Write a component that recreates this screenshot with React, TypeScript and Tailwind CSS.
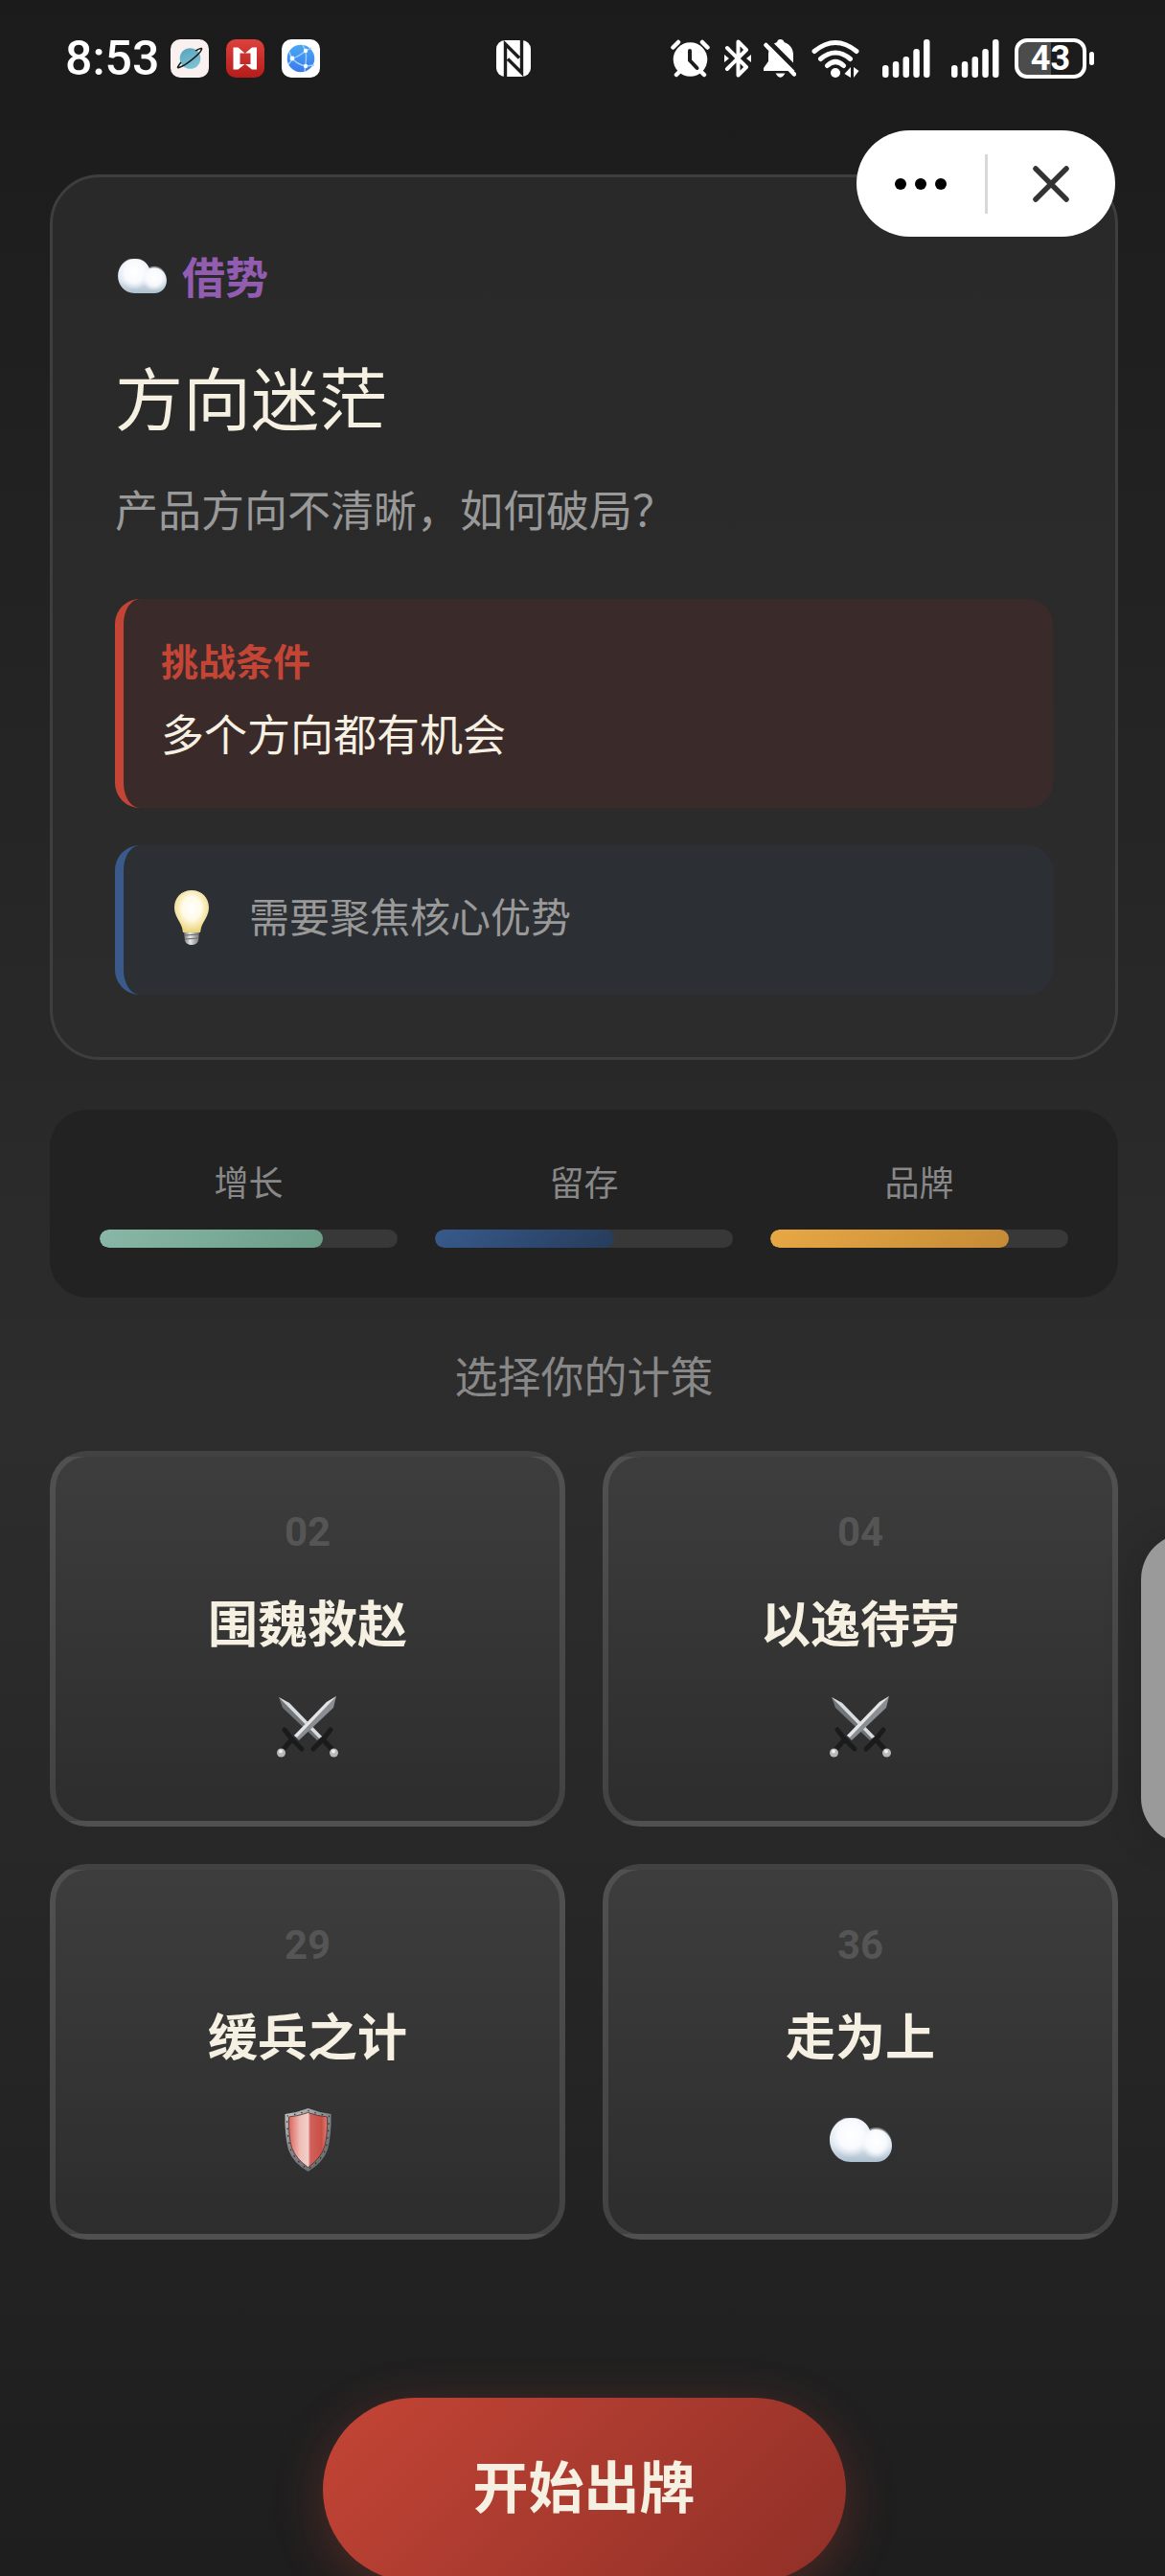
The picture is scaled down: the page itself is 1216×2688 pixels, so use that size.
import type { ReactNode } from 'react';

type IconKind = 'swords' | 'shield' | 'cloud';

const STATS = [
    { label: '增长', value: 75, fill: 'bg-[linear-gradient(135deg,#8ab8a8,#6a9c88)]' },
    { label: '留存', value: 60, fill: 'bg-[linear-gradient(135deg,#385a8c,#263c5a)]' },
    { label: '品牌', value: 80, fill: 'bg-[linear-gradient(135deg,#e8a845,#c48a35)]' },
];

const STRATEGIES: { no: string; name: string; icon: IconKind }[] = [
    { no: '02', name: '围魏救赵', icon: 'swords' },
    { no: '04', name: '以逸待劳', icon: 'swords' },
    { no: '29', name: '缓兵之计', icon: 'shield' },
    { no: '36', name: '走为上', icon: 'cloud' },
];

function Cloud({ className }: { className: string }) {
    return (
        <svg viewBox="0 0 65 46" className={className} aria-hidden="true">
            <defs>
                <radialGradient id="puff" cx="0.5" cy="0.42" r="0.5">
                    <stop offset="0" stopColor="#ffffff" />
                    <stop offset="0.6" stopColor="#fbfcff" stopOpacity="0.9" />
                    <stop offset="1" stopColor="#f2f5fb" stopOpacity="0" />
                </radialGradient>
                <linearGradient id="cloudBase" x1="0" y1="0" x2="0" y2="1">
                    <stop offset="0" stopColor="#f1f4fa" />
                    <stop offset="0.6" stopColor="#dde6ef" />
                    <stop offset="1" stopColor="#adc0ce" />
                </linearGradient>
            </defs>
            <path d="M22 0C33 0 40 6 42 13.500 44 12.300 46 12 48.500 12 58 12 65 19.500 65 29S58 46 48.500 46H22C9 46 0 35 0 23S9 0 22 0z" fill="url(#cloudBase)" />
            <ellipse cx="22" cy="22" rx="22" ry="23" fill="url(#puff)" />
            <ellipse cx="48.500" cy="28" rx="17" ry="18" fill="url(#puff)" />
        </svg>
    );
}

function Swords() {
    return (
        <svg viewBox="0 0 64 64" className="h-16 w-16" aria-hidden="true">
            <path d="M38 55 48 45l8-10M49 46l9 10" stroke="#1b1b1b" strokeWidth="5" fill="none" strokeLinecap="round" />
            <path d="M2 1l11 6 34 35-5 4L6 12z" fill="#70757a" />
            <path d="M2 1l11 6 34 35-3 2z" fill="#d9dbdd" />
            <path d="M26 55 16 45 8 35M15 46 6 56" stroke="#1b1b1b" strokeWidth="5" fill="none" strokeLinecap="round" />
            <path d="M62 0 52 6 18 41l5 5 36-34z" fill="#8a8e92" />
            <path d="M62 0 52 6 18 41l3 2z" fill="#e4e5e6" />
            <circle cx="4.500" cy="59" r="4.500" fill="#b9b9b9" />
            <circle cx="59.500" cy="59" r="4.500" fill="#b9b9b9" />
            <circle cx="4" cy="57.500" r="2" fill="#eeeeee" />
            <circle cx="59" cy="57.500" r="2" fill="#eeeeee" />
        </svg>
    );
}

function Shield() {
    return (
        <svg viewBox="0 0 49 66" className="h-[66px] w-[49px]" aria-hidden="true">
            <defs>
                <linearGradient id="shieldFace" x1="0" x2="1">
                    <stop offset="0" stopColor="#d9655c" />
                    <stop offset="0.3" stopColor="#f0bfb8" />
                    <stop offset="0.5" stopColor="#f2cfc9" />
                    <stop offset="0.56" stopColor="#d0625a" />
                    <stop offset="0.85" stopColor="#c94f46" />
                    <stop offset="1" stopColor="#e07b72" />
                </linearGradient>
                <linearGradient id="shieldRim" x1="0" y1="0" x2="0.6" y2="1">
                    <stop offset="0" stopColor="#c9c9cb" />
                    <stop offset="0.5" stopColor="#85868a" />
                    <stop offset="1" stopColor="#6b6c70" />
                </linearGradient>
            </defs>
            <path d="M0.500 6Q13 4.500 24.500 0 36 4.500 48.500 6 49 28 45 43 40 57 24.500 66 9 57 4 43 0 28 0.500 6z" fill="url(#shieldRim)" />
            <path d="M2.500 8Q14 6 24.500 2.500 35 6 46.500 8 46 30 43 42 38 55 24.500 63.500 11 55 6 42 3 30 2.500 8z" fill="none" stroke="#2b2b2d" strokeWidth="1.200" strokeDasharray="1.500 6" />
            <path d="M4.500 9Q15 8 24.500 4.500 34 8 44.500 9 45 29 41.500 41 37 53 24.500 61.500 12 53 7.500 41 4 29 4.500 9z" fill="url(#shieldFace)" stroke="#4b3031" strokeWidth="0.800" />
        </svg>
    );
}

function Bulb() {
    return (
        <svg viewBox="0 0 36 57" className="h-[57px] w-9" aria-hidden="true">
            <defs>
                <radialGradient id="glass" cx="0.5" cy="0.42" r="0.6">
                    <stop offset="0" stopColor="#ffffff" />
                    <stop offset="0.45" stopColor="#fffbe6" />
                    <stop offset="1" stopColor="#ead071" />
                </radialGradient>
                <linearGradient id="screw" x1="0" x2="1">
                    <stop offset="0" stopColor="#77797b" />
                    <stop offset="0.4" stopColor="#e6e6e6" />
                    <stop offset="1" stopColor="#747678" />
                </linearGradient>
            </defs>
            <path d="M10 43h16l-1 10q-2 4-7 4t-7-4z" fill="url(#screw)" />
            <path d="M11 47l14-1M11 51l13-1" stroke="#66686a" strokeWidth="1" />
            <path d="M18 0c11 0 18 8 18 18 0 9-6 14-8 21l-1 5H9l-1-5C6 32 0 27 0 18 0 8 7 0 18 0z" fill="url(#glass)" />
        </svg>
    );
}

function StrategyIcon({ kind }: { kind: IconKind }) {
    if (kind === 'swords') return <Swords />;
    if (kind === 'shield') return <Shield />;
    return <Cloud className="h-[46px] w-[65px]" />;
}

function Signal() {
    return (
        <svg viewBox="0 0 50 40" className="h-10 w-[50px]" fill="#ffffff" aria-hidden="true">
            <rect x="0" y="27" width="6.500" height="13" rx="3" />
            <rect x="10.800" y="23" width="6.500" height="17" rx="3" />
            <rect x="21.500" y="18" width="6.500" height="22" rx="3" />
            <rect x="32.300" y="10" width="6.500" height="30" rx="3" />
            <rect x="43" y="0" width="6.500" height="40" rx="3" />
        </svg>
    );
}

function StatusBar() {
    return (
        <div className="flex h-[122px] items-center justify-between pr-[74px] pl-[68px] text-white">
            <div className="flex items-center">
                <span className="w-[110px] font-[Roboto,sans-serif] text-[50px] leading-none font-medium">8:53</span>
                <div className="flex gap-[18px]">
                    <svg viewBox="0 0 40 40" className="h-10 w-10" aria-hidden="true">
                        <defs>
                            <linearGradient id="planet" x1="0" y1="0" x2="0.4" y2="1">
                                <stop offset="0" stopColor="#56a3bd" />
                                <stop offset="1" stopColor="#7dc0d2" />
                            </linearGradient>
                        </defs>
                        <rect width="40" height="40" rx="10" fill="#f8f1ef" />
                        <circle cx="20.500" cy="20" r="10.800" fill="url(#planet)" />
                        <path d="M11 24c-4 5-5 7-1 5 6-2 17-11 21-16 3-4 2-5-5-1" stroke="#161616" strokeWidth="1.400" fill="none" />
                    </svg>
                    <svg viewBox="0 0 40 40" className="h-10 w-10" aria-hidden="true">
                        <defs>
                            <linearGradient id="redApp" x1="0" y1="0" x2="0" y2="1">
                                <stop offset="0" stopColor="#dc413d" />
                                <stop offset="1" stopColor="#b41d1b" />
                            </linearGradient>
                        </defs>
                        <rect width="40" height="40" rx="10" fill="url(#redApp)" />
                        <path d="M7.500 8.500h5l7 6h-5v11.500h5l-7 5.500h-5zM32 8.500h-5l-7 6h5.500v11.500H20l7 5.500h5z" fill="#ffffff" />
                    </svg>
                    <svg viewBox="0 0 40 40" className="h-10 w-10" aria-hidden="true">
                        <defs>
                            <linearGradient id="globe" x1="0" y1="0" x2="0" y2="1">
                                <stop offset="0" stopColor="#4ba9f2" />
                                <stop offset="1" stopColor="#3b78f0" />
                            </linearGradient>
                        </defs>
                        <rect width="40" height="40" rx="10" fill="#ffffff" />
                        <circle cx="20" cy="20" r="14.300" fill="url(#globe)" />
                        <path d="M22 6q4 7 3.500 14T24 34M7 26q4-4 4-6 7-2 14-8l6-3M11 20q5 6 14 8l9-1M11 20q-2-3-3-7" stroke="#9fd4fb" strokeWidth="1.300" fill="none" />
                        <circle cx="11" cy="20" r="2.400" fill="#ffffff" />
                        <circle cx="25" cy="12" r="2.200" fill="#ffffff" />
                        <circle cx="25" cy="28" r="2.200" fill="#ffffff" />
                    </svg>
                </div>
                <svg viewBox="0 0 36 38" className="ml-[184px] h-[38px] w-9" aria-label="NFC">
                    <rect width="36" height="38" rx="9" fill="#ffffff" />
                    <path d="M9.500 38V4L24 18.500M26.500 0v34L12 19.500" stroke="#1c1c1c" strokeWidth="3.400" fill="none" />
                </svg>
            </div>
            <div className="flex items-center">
                <svg viewBox="0 0 41 40" className="h-10 w-[41px]" aria-label="闹钟">
                    <path d="M2.500 8.500 8 3M38.500 8.500 33 3M6 37l4-4M35 37l-4-4" stroke="#ffffff" strokeWidth="4.500" strokeLinecap="round" />
                    <circle cx="20.500" cy="21" r="17.800" fill="#ffffff" />
                    <path d="M20 12v10l7.500 8" stroke="#1c1c1c" strokeWidth="4" fill="none" strokeLinecap="round" strokeLinejoin="round" />
                </svg>
                <svg viewBox="0 0 28 40" className="ml-[15px] h-10 w-7" aria-label="蓝牙">
                    <path d="M3 9l20 20-8.500 8.500v-35L23 11 3 31" stroke="#ffffff" strokeWidth="4" fill="none" strokeLinecap="round" strokeLinejoin="round" />
                    <path d="M0 16l5 4-5 4zM28 16l-5 4 5 4z" fill="#ffffff" />
                </svg>
                <svg viewBox="0 0 34 40" className="ml-[13px] h-10 w-[34px]" aria-label="静音">
                    <path d="M17.500 0c2 0 3.500 1 4 3 6 2 9.500 7 9.500 13v9l3 8H0v-3l5-7v-7C5 10 8 5 14 3c.5-2 1.500-3 3.500-3z" fill="#ffffff" />
                    <path d="M12.500 35.500h10q-5 8.500-10 0z" fill="#ffffff" />
                    <path d="M1-2l34 34" stroke="#1c1c1c" strokeWidth="5" />
                    <path d="M2.500 6 32 36.500" stroke="#ffffff" strokeWidth="4.500" strokeLinecap="round" />
                </svg>
                <svg viewBox="0 0 50 40" className="ml-4 h-10 w-[50px]" aria-label="无线网络">
                    <path d="M3 12.500q22-18 44 0M9.500 20.500q15.500-13 31 0M16.500 27.500q8.500-8 17 0" stroke="#ffffff" strokeWidth="5" fill="none" strokeLinecap="round" />
                    <circle cx="25" cy="35" r="5" fill="#ffffff" />
                    <path d="M41 29v11l-6.500-4zM44 29v11l5.500-7z" fill="#ffffff" />
                </svg>
                <div className="ml-6 flex gap-[22px]">
                    <Signal />
                    <Signal />
                </div>
                <div className="ml-4 flex items-center gap-[3px]">
                    <div className="flex h-[42px] w-[75px] items-center justify-center rounded-[13px] border-4 border-white bg-[linear-gradient(90deg,#4c4c4c_50%,transparent_50%)] font-[Roboto,sans-serif] text-[36px] leading-none font-bold">
                        43
                    </div>
                    <div className="h-3.5 w-[5px] rounded-full bg-white" />
                </div>
            </div>
        </div>
    );
}

function Callout({ tone, children }: { tone: string; children: ReactNode }) {
    return <div className={`rounded-[26px] border-l-[9px] px-[39px] pt-9 pb-[42px] ${tone}`}>{children}</div>;
}

export default function App() {
    return (
        <div className="relative h-screen overflow-hidden bg-[#1a1a1a] font-['Noto_Sans_CJK_SC',sans-serif]">
            <div className="h-full overflow-y-auto [scrollbar-width:none]">
                <div className="bg-[linear-gradient(180deg,#1b1b1b_0%,#2d2d2d_50%,#1a1a1a_100%)] pb-[280px]">
                    <StatusBar />

                    <main className="pt-[60px] pr-[49px] pl-[52px]">
                        {/* Situation card */}
                        <section className="rounded-[52px] border-[3px] border-[#3e3e3e] bg-[linear-gradient(180deg,#292929,#2c2c2c)] p-[65px]">
                            <div className="flex items-center gap-4 text-[45px] leading-[76px] font-bold text-[#925cb1]">
                                <Cloud className="ml-[3px] h-9 w-[51px]" />
                                <span>借势</span>
                            </div>
                            <h1 className="mt-9 text-[71px] leading-[100px] text-[#f5f0e1]">方向迷茫</h1>
                            <p className="mt-8 text-[45px] leading-[73px] text-[#999999]">产品方向不清晰，如何破局？</p>

                            <div className="mt-[58px] flex flex-col gap-[39px]">
                                <Callout tone="border-[#c44536] bg-[#3a2b2a]">
                                    <h2 className="text-[39px] leading-[55px] font-bold text-[#c44536]">挑战条件</h2>
                                    <p className="mt-3 text-[45px] leading-[73px] text-[#f5f0e1]">多个方向都有机会</p>
                                </Callout>
                                <Callout tone="border-[#3a5a8c] bg-[#2c2f33]">
                                    <div className="flex h-[78px] items-center">
                                        <div className="flex w-[92px] pl-3.5">
                                            <Bulb />
                                        </div>
                                        <p className="pb-1 text-[42px] leading-[68px] text-[#999999]">需要聚焦核心优势</p>
                                    </div>
                                </Callout>
                            </div>
                        </section>

                        {/* Stats */}
                        <section className="mt-[52px] grid grid-cols-3 gap-[39px] rounded-[39px] bg-[#222222] p-[52px]">
                            {STATS.map((stat) => (
                                <div key={stat.label} className="text-center">
                                    <p className="text-[36px] leading-[44px] text-[#888888]">{stat.label}</p>
                                    <div
                                        role="progressbar"
                                        aria-label={stat.label}
                                        aria-valuenow={stat.value}
                                        className="mt-[29px] h-[19px] overflow-hidden rounded-[10px] bg-[#383838]"
                                    >
                                        <div className={`h-full rounded-[10px] ${stat.fill}`} style={{ width: `${stat.value}%` }} />
                                    </div>
                                </div>
                            ))}
                        </section>

                        {/* Strategy picker */}
                        <h2 className="mt-[46px] text-center text-[45px] leading-[70px] text-[#888888]">选择你的计策</h2>
                        <div className="mt-11 grid grid-cols-2 gap-[39px]">
                            {STRATEGIES.map((item) => (
                                <button
                                    key={item.no}
                                    type="button"
                                    className="flex h-[392px] flex-col items-center rounded-[39px] border-[6px] border-white/10 bg-[linear-gradient(180deg,#3d3d3d,#2d2d2d)] pt-12"
                                >
                                    <span className="font-[Roboto,sans-serif] text-[42px] leading-[62px] font-bold text-[#555555]">{item.no}</span>
                                    <span className="mt-5 text-[52px] leading-[84px] font-bold text-[#f5f0e1]">{item.name}</span>
                                    <span className="mt-9 flex h-16 items-center">
                                        <StrategyIcon kind={item.icon} />
                                    </span>
                                </button>
                            ))}
                        </div>

                        <div className="mt-[165px] flex justify-center">
                            <button
                                type="button"
                                className="h-48 w-[546px] rounded-full bg-[linear-gradient(135deg,#c44536,#8f2f27)] pb-3 text-[58px] leading-[84px] font-bold text-[#f5f0e1] shadow-[0_13px_52px_rgba(196,69,54,0.3)]"
                            >
                                开始出牌
                            </button>
                        </div>
                    </main>
                </div>
            </div>

            {/* Mini-program capsule */}
            <div className="absolute top-[136px] right-[52px] flex h-[111px] w-[270px] items-center rounded-full bg-white">
                <button type="button" aria-label="更多" className="flex h-full flex-1 items-center justify-center gap-[9px]">
                    <span className="h-3 w-3 rounded-full bg-black" />
                    <span className="h-3 w-3 rounded-full bg-black" />
                    <span className="h-3 w-3 rounded-full bg-black" />
                </button>
                <span className="h-[62px] w-[3px] bg-[#d8d8d8]" />
                <button type="button" aria-label="关闭" className="flex h-full flex-1 items-center justify-center">
                    <svg viewBox="0 0 38 38" className="h-[38px] w-[38px]">
                        <path d="M3 3l32 32M35 3 3 35" stroke="#333333" strokeWidth="5.500" strokeLinecap="round" />
                    </svg>
                </button>
            </div>

            {/* Edge handle, half off screen */}
            <button
                type="button"
                aria-label="侧边栏"
                className="absolute top-[1600px] -right-6 h-[324px] w-[49px] rounded-l-[48px] bg-[#9a9a9a] shadow-[0_0_40px_rgba(0,0,0,0.15)]"
            />
        </div>
    );
}
